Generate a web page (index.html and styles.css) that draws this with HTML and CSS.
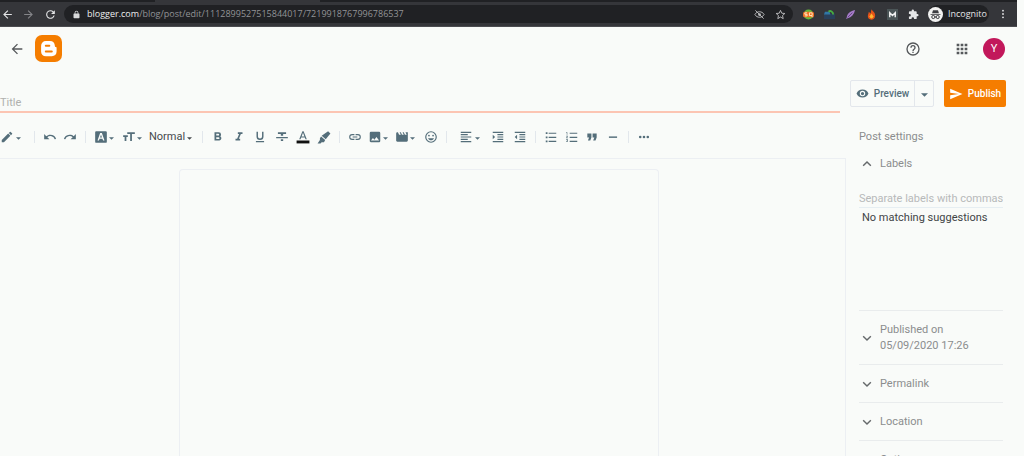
FILE: index.html
```html
<!DOCTYPE html>
<html lang="en">
<head>
<meta charset="utf-8">
<title>Blogger: edit post</title>
<link rel="stylesheet" href="styles.css">
</head>
<body>
<svg class="defs" aria-hidden="true">
  <symbol id="caret" viewBox="0 0 6 3"><path d="M0 0h6L3 3z"/></symbol>
  <symbol id="back" viewBox="0 0 24 24"><path d="M20 11H7.83l5.59-5.59L12 4l-8 8 8 8 1.41-1.41L7.83 13H20z"/></symbol>
  <symbol id="down" viewBox="0 0 24 24"><path d="M17 8.500 12 13.500 7 8.500 5.500 10l6.500 6.500L18.500 10z"/></symbol>
</svg>
<div class="browser">
  <div class="tabs"><span class="tab"></span></div>
  <div class="navbar">
    <button class="nav" aria-label="Back"><svg viewBox="0 0 24 24"><use href="#back"/></svg></button>
    <button class="nav dim" aria-label="Forward"><svg viewBox="0 0 24 24"><path d="m12 4-1.410 1.410L16.170 11H4v2h12.170l-5.580 5.590L12 20l8-8z"/></svg></button>
    <button class="nav" aria-label="Reload"><svg viewBox="0 0 24 24"><path d="M17.650 6.350A8 8 0 1 0 19.730 14h-2.080A6 6 0 1 1 12 6c1.660 0 3.140.690 4.220 1.780L13 11h7V4z"/></svg></button>
    <div class="address">
      <svg class="lock" viewBox="0 0 24 24"><path d="M18 9h-1V7A5 5 0 0 0 7 7v2H6a2 2 0 0 0-2 2v9c0 1.100.9 2 2 2h12a2 2 0 0 0 2-2v-9a2 2 0 0 0-2-2zM9 9V7a3 3 0 0 1 6 0v2z"/></svg>
      <span class="url"><b>blogger.com</b>/blog/post/edit/1112899527515844017/7219918767996786537</span>
      <button aria-label="Cookies blocked"><svg viewBox="0 0 24 24"><path fill="none" stroke="currentColor" stroke-width="2" d="M2 12c4-8 16-8 20 0-4 8-16 8-20 0zM3 3l18 18"/><circle cx="12" cy="12" r="3"/></svg></button>
      <button aria-label="Bookmark"><svg viewBox="0 0 24 24"><path fill="none" stroke="currentColor" stroke-width="2" d="m12 3 2.700 6.200 6.800.6-5.100 4.500 1.500 6.700-5.900-3.500L6.100 21l1.500-6.700-5.100-4.500 6.800-.6z"/></svg></button>
    </div>
    <div class="extensions">
      <button aria-label="SEO extension"><svg viewBox="0 0 12 12"><circle cx="6" cy="6" r="5.500" fill="#64b83c"/><rect x="0" y="3" width="12" height="6" rx="2" fill="#ef6c20"/><path fill="none" stroke="#fff3c8" d="M4.500 4.200H2v1.600h2.500v1.700H2M7 4.200h3v3H7zM9 7l1.500 2"/></svg></button>
      <button aria-label="Rank extension"><svg viewBox="0 0 12 12"><path fill="#29405a" d="M0 5h12v6H0z"/><path fill="#3177a5" d="M1 3h5l1 3H0z"/><path fill="none" stroke="#46ac42" stroke-width="2" d="M5 3c2-2 5 0 5 3"/></svg></button>
      <button aria-label="Feather extension"><svg viewBox="0 0 12 12"><path fill="#a57bc8" d="M11 1C5 2 2 6 2 9l-1 2 2-1c4-1 7-4 8-9z"/><path stroke="#61457f" d="m3 9 5-5"/></svg></button>
      <button aria-label="Flame extension"><svg viewBox="0 0 12 12"><path fill="#e65318" d="M6 0c0 2 4 3 4 7 0 6-8 6-8 1 0-2 1-3 1-5l2 2z"/><path fill="#ffb52e" d="m6 5 2 3c0 3-4 3-4 0z"/></svg></button>
      <button aria-label="M extension"><svg viewBox="0 0 12 12"><path fill="#4b5557" d="M0 0h12v12H0z"/><path fill="none" stroke="#f1f1f1" stroke-width="1.600" d="M3 9V4l3 3 3-3v5"/></svg></button>
      <button aria-label="Extensions"><svg viewBox="0 0 24 24"><path d="M20.500 11H19V7a2 2 0 0 0-2-2h-4V3.500a2.500 2.500 0 0 0-5 0V5H4a2 2 0 0 0-2 2v3.800h1.500a2.700 2.700 0 0 1 0 5.400H2V20c0 1.100.9 2 2 2h3.800v-1.500a2.700 2.700 0 0 1 5.400 0V22H17a2 2 0 0 0 2-2v-4h1.500a2.500 2.500 0 0 0 0-5z"/></svg></button>
    </div>
    <button class="incognito"><svg viewBox="0 0 24 24"><circle cx="12" cy="12" r="12" fill="#f1f1f1"/><path fill="#3c3d42" d="M8 5h8l1.500 5h-11zM4 11h16v1.500H4z"/><path fill="none" stroke="#3c3d42" stroke-width="1.600" d="M11 16h2"/><circle cx="8.500" cy="16" r="2.500" fill="none" stroke="#3c3d42" stroke-width="1.600"/><circle cx="15.500" cy="16" r="2.500" fill="none" stroke="#3c3d42" stroke-width="1.600"/></svg>Incognito</button>
    <button class="nav more" aria-label="Menu"><svg viewBox="0 0 24 24"><circle cx="12" cy="4" r="2.200"/><circle cx="12" cy="12" r="2.200"/><circle cx="12" cy="20" r="2.200"/></svg></button>
  </div>
</div>

<header class="appbar">
  <button class="back" aria-label="Back to posts"><svg viewBox="0 0 24 24"><use href="#back"/></svg></button>
  <a class="logo" href="#" aria-label="Blogger"><svg viewBox="0 0 27 27"><rect width="27" height="27" rx="7" fill="#f57d00"/><path fill="#fff" d="M11 6h4c3 0 4.700 2 4.800 4.500.1 1.200.4 1.500 1.200 1.600.4.100.6.400.6.900v3.500c0 2.800-2 4.700-4.700 4.700H11c-3 0-4.900-2-4.900-4.800V11c0-3 1.900-5 4.900-5z"/><path stroke="#f57d00" stroke-width="2" stroke-linecap="round" d="M10.800 10.700h3.500M10.800 16.500h6"/></svg></a>
  <button class="help" aria-label="Help"><svg viewBox="0 0 24 24"><path d="M11 18h2v-2h-2zm1-16a10 10 0 1 0 0 20 10 10 0 0 0 0-20zm0 18a8 8 0 1 1 0-16 8 8 0 0 1 0 16zm0-14a4 4 0 0 0-4 4h2a2 2 0 1 1 4 0c0 2-3 1.750-3 5h2c0-2.250 3-2.500 3-5a4 4 0 0 0-4-4z"/></svg></button>
  <button class="apps" aria-label="Google apps"><svg viewBox="0 0 24 24"><path d="M4 8h4V4H4zm6 12h4v-4h-4zm-6 0h4v-4H4zm0-6h4v-4H4zm6 0h4v-4h-4zm6-10v4h4V4zm-6 4h4V4h-4zm6 6h4v-4h-4zm0 6h4v-4h-4z"/></svg></button>
  <button class="avatar" aria-label="Account">Y</button>
</header>

<main class="workspace">
  <section class="editor">
    <input class="title" type="text" placeholder="Title" aria-label="Title">
    <div class="toolbar" role="toolbar" aria-label="Formatting">
      <div class="group mode">
        <button class="menu" aria-label="View"><svg viewBox="0 0 24 24"><path d="M3 17.250V21h3.750L17.810 9.940l-3.750-3.750zM20.710 7.040a1 1 0 0 0 0-1.410l-2.340-2.340a1 1 0 0 0-1.410 0l-1.830 1.830 3.750 3.750z"/></svg><svg class="caret"><use href="#caret"/></svg></button>
      </div>
      <div class="group history">
        <button aria-label="Undo"><svg viewBox="0 0 24 24"><path d="M12.500 8c-2.650 0-5.050.990-6.900 2.600L2 7v9h9l-3.620-3.620A8 8 0 0 1 20.100 16l2.370-.780A10.500 10.500 0 0 0 12.500 8z"/></svg></button>
        <button aria-label="Redo"><svg viewBox="0 0 24 24"><path d="M18.400 10.600A10.500 10.500 0 0 0 1.540 15.220L3.900 16a8 8 0 0 1 12.720-3.620L13 16h9V7z"/></svg></button>
      </div>
      <div class="group type">
        <button class="menu" aria-label="Font"><svg viewBox="0 0 24 24"><path fill-rule="evenodd" d="M4 2h16a2 2 0 0 1 2 2v16a2 2 0 0 1-2 2H4a2 2 0 0 1-2-2V4c0-1.100.9-2 2-2zm6.500 3L6 18h2.500l1-3h5l1 3H18L13.500 5zM12 8l1.700 5h-3.400z"/></svg><svg class="caret"><use href="#caret"/></svg></button>
        <button class="menu" aria-label="Font size"><svg viewBox="0 0 24 24"><path d="M9 4v3h5v12h3V7h5V4zm-7 8h2.500v7h3v-7H10V9H2z"/></svg><svg class="caret"><use href="#caret"/></svg></button>
        <button class="menu style">Normal<svg class="caret"><use href="#caret"/></svg></button>
      </div>
      <div class="group text">
        <button aria-label="Bold"><svg viewBox="0 0 24 24"><path d="M15.600 10.790c.970-.670 1.650-1.770 1.650-2.790A4 4 0 0 0 13.250 4H6v14h8.040c2.090 0 3.710-1.700 3.710-3.790 0-1.520-.860-2.820-2.150-3.420zM9 6.500h3.500a1.500 1.500 0 0 1 0 3H9zm4 9H9v-3h4a1.500 1.500 0 0 1 0 3z"/></svg></button>
        <button aria-label="Italic"><svg viewBox="0 0 24 24"><path d="M10 4v3h2.210l-3.420 8H6v3h8v-3h-2.210l3.420-8H18V4z"/></svg></button>
        <button aria-label="Underline"><svg viewBox="0 0 24 24"><path d="M12 17a6 6 0 0 0 6-6V3h-2.500v8a3.500 3.500 0 0 1-7 0V3H6v8a6 6 0 0 0 6 6zm-7 2v2h14v-2z"/></svg></button>
        <button aria-label="Strikethrough"><svg viewBox="0 0 24 24"><path d="M10 19h4v-3h-4zM5 4v3h5v3h4V7h5V4zM2 14h20v-2H2z"/></svg></button>
        <button aria-label="Text colour"><svg viewBox="0 0 24 24"><path d="M11 2 5.500 16h2.250l1.120-3h6.250l1.120 3h2.250L13 2zm-1.380 9L12 4.670 14.380 11z"/><path fill="#111" d="M1 18h22v5H1z"/></svg></button>
        <button aria-label="Highlight"><svg viewBox="0 0 24 24"><path d="m19 2 4 4-8 10-7-6zM7 11l7 6-2 4H8l-2 2H1l4-6v-3z"/></svg></button>
      </div>
      <div class="group insert">
        <button aria-label="Link"><svg viewBox="0 0 24 24"><path d="M3.900 12A3.100 3.100 0 0 1 7 8.900h4V7H7a5 5 0 0 0 0 10h4v-1.900H7A3.100 3.100 0 0 1 3.900 12zM8 13h8v-2H8zm9-6h-4v1.900h4a3.100 3.100 0 0 1 0 6.200h-4V17h4a5 5 0 0 0 0-10z"/></svg></button>
        <button class="menu" aria-label="Image"><svg viewBox="0 0 24 24"><path d="M21 19V5a2 2 0 0 0-2-2H5a2 2 0 0 0-2 2v14c0 1.100.9 2 2 2h14a2 2 0 0 0 2-2zM8.500 13.500l2.500 3 3.500-4.500 4.500 6H5z"/></svg><svg class="caret"><use href="#caret"/></svg></button>
        <button class="menu" aria-label="Video"><svg viewBox="0 0 24 24"><path d="m18 4 2 4h-3l-2-4h-2l2 4h-3l-2-4H8l2 4H7L5 4H4a2 2 0 0 0-2 2v12c0 1.100.9 2 2 2h16a2 2 0 0 0 2-2V4z"/></svg><svg class="caret"><use href="#caret"/></svg></button>
        <button aria-label="Emoji"><svg viewBox="0 0 24 24"><circle cx="12" cy="12" r="9" fill="none" stroke="currentColor" stroke-width="2"/><circle cx="8.500" cy="9.500" r="1.500"/><circle cx="15.500" cy="9.500" r="1.500"/><path d="M12 17.500c2.330 0 4.310-1.460 5.110-3.500H6.890c.8 2.040 2.780 3.500 5.110 3.500z"/></svg></button>
      </div>
      <div class="group align">
        <button class="menu" aria-label="Align"><svg viewBox="0 0 24 24"><path d="M15 15H3v2h12zm0-8H3v2h12zM3 13h18v-2H3zm0 8h18v-2H3zM3 3v2h18V3z"/></svg><svg class="caret"><use href="#caret"/></svg></button>
        <button aria-label="Increase indent"><svg viewBox="0 0 24 24"><path d="M3 21h18v-2H3zM3 8v8l4-4zm8 9h10v-2H11zM3 3v2h18V3zm8 6h10V7H11zm0 4h10v-2H11z"/></svg></button>
        <button aria-label="Decrease indent"><svg viewBox="0 0 24 24"><path d="M11 17h10v-2H11zm-8-5 4 4V8zm0 9h18v-2H3zM3 3v2h18V3zm8 6h10V7H11zm0 4h10v-2H11z"/></svg></button>
      </div>
      <div class="group lists">
        <button aria-label="Bulleted list"><svg viewBox="0 0 24 24"><path d="M3 4h3v3H3zm0 7h3v3H3zm0 7h3v3H3zM8 4.500h13v2H8zm0 7h13v2H8zm0 7h13v2H8z"/></svg></button>
        <button aria-label="Numbered list"><svg viewBox="0 0 24 24"><path d="M2 17h2v.5H3v1h1v.5H2v1h3v-4H2zm1-9h1V4H2v1h1zm-1 3h1.800L2 13.100v.9h3v-1H3.200L5 10.900V10H2zM8 4.500h13v2H8zm0 7h13v2H8zm0 7h13v2H8z"/></svg></button>
        <button aria-label="Quote"><svg viewBox="0 0 24 24"><path d="M5 18h4l2-5V6H4v7h3zm9 0h4l2-5V6h-7v7h3z"/></svg></button>
        <button aria-label="Horizontal line"><svg viewBox="0 0 24 24"><path d="M5 11h14v2.500H5z"/></svg></button>
      </div>
      <div class="group last">
        <button aria-label="More"><svg viewBox="0 0 24 24"><circle cx="5.500" cy="12" r="2.200"/><circle cx="12" cy="12" r="2.200"/><circle cx="18.500" cy="12" r="2.200"/></svg></button>
      </div>
    </div>
    <div class="canvas"><div class="page" contenteditable="true" role="textbox" aria-label="Post body"></div></div>
  </section>

  <aside class="side">
    <div class="actions">
      <div class="split">
        <button class="preview"><svg viewBox="0 0 24 24"><path d="M12 4.500A11.800 11.800 0 0 0 1 12a11.800 11.800 0 0 0 22 0 11.800 11.800 0 0 0-11-7.500zM12 17a5 5 0 1 1 0-10 5 5 0 0 1 0 10zm0-8a3 3 0 1 0 0 6 3 3 0 0 0 0-6z"/></svg>Preview</button>
        <button class="drop" aria-label="Preview options"><svg class="caret"><use href="#caret"/></svg></button>
      </div>
      <button class="publish"><svg viewBox="0 0 24 24"><path d="M2 21 23 12 2 3v7l15 2-15 2z"/></svg>Publish</button>
    </div>
    <div class="settings">
      <h2>Post settings</h2>
      <div class="labels">
        <button class="row open"><svg viewBox="0 0 24 24"><use href="#down"/></svg><span>Labels</span></button>
        <input type="text" placeholder="Separate labels with commas" aria-label="Labels">
        <p>No matching suggestions</p>
      </div>
      <button class="row"><svg viewBox="0 0 24 24"><use href="#down"/></svg><span>Published on<br>05/09/2020 17:26</span></button>
      <button class="row"><svg viewBox="0 0 24 24"><use href="#down"/></svg><span>Permalink</span></button>
      <button class="row"><svg viewBox="0 0 24 24"><use href="#down"/></svg><span>Location</span></button>
      <button class="row"><svg viewBox="0 0 24 24"><use href="#down"/></svg><span>Options</span></button>
    </div>
  </aside>
</main>
</body>
</html>
```
FILE: styles.css
```css
* { box-sizing: border-box; }
body {
  margin: 0;
  height: 100vh;
  overflow: hidden;
  display: flex;
  flex-direction: column;
  background: #f9fbf9;
  color: #8b8d8e;
  font: 11px/16px Roboto, sans-serif;
}
button, input {
  margin: 0;
  padding: 0;
  border: 0;
  background: none;
  color: inherit;
  font: inherit;
}
input { outline: 0; }
button {
  display: flex;
  align-items: center;
  justify-content: center;
  flex-shrink: 0;
}
svg { display: block; flex-shrink: 0; fill: currentColor; }
.defs { position: absolute; width: 0; height: 0; }
.caret { width: 5px; height: 3px; }

/* Browser frame */
.browser {
  flex-shrink: 0;
  margin-right: 7px;
  background: #35363a;
  border-bottom: 1px solid #4b4c50;
  color: #e4e5e7;
  font: 9px/16px "Open Sans", sans-serif;
}
.tabs { height: 2px; background: #202124; padding-left: 155px; }
.tab { display: block; width: 165px; height: 2px; background: #35363a; }
.navbar { display: flex; align-items: center; height: 24px; }
.nav { width: 21px; height: 20px; }
.nav:first-child { width: 18px; padding-right: 3px; }
.nav svg { width: 13px; height: 13px; }
.dim { color: #85868a; }
.nav + .nav + .nav { width: 22px; }
.address {
  flex: 1;
  display: flex;
  align-items: center;
  height: 18px;
  margin-left: 3px;
  padding: 0 2px 0 8px;
  border-radius: 9px;
  background: #202124;
  color: #929396;
}
.lock { width: 9px; height: 9px; margin-right: 6px; color: #d8d9da; }
.url { flex: 1; white-space: nowrap; }
.url b { color: #eceded; font-weight: 400; }
.address button { width: 21px; color: #bfc0c2; }
.address button svg { width: 11px; height: 11px; }
.extensions { display: flex; padding-left: 5px; }
.extensions button { width: 21px; height: 18px; }
.extensions svg { width: 11px; height: 11px; }
.incognito {
  gap: 5px;
  height: 18px;
  margin-left: 4px;
  padding: 0 2px 0 0;
  border-radius: 9px;
  background: #202124;
}
.incognito svg { width: 15px; height: 15px; }
.navbar .more { width: 28px; }
.more svg { width: 10px; height: 10px; }

/* Application header */
.appbar {
  flex-shrink: 0;
  display: flex;
  align-items: center;
  height: 43px;
  padding: 0 19px 0 9px;
  color: #55585b;
}
.back svg, .help svg, .apps svg { width: 16px; height: 16px; }
.logo { width: 27px; margin-left: 10px; }
.help { margin-left: auto; }
.apps { margin: 0 13px 0 33px; }
.avatar {
  width: 22px;
  height: 22px;
  border-radius: 50%;
  background: #c2185b;
  color: #fff;
}

/* Workspace */
.workspace {
  flex: 1;
  min-height: 0;
  display: grid;
  grid-template-columns: minmax(0, 1fr) 178px;
}
.editor { display: flex; flex-direction: column; min-width: 0; }
.title {
  height: 43px;
  margin-right: 6px;
  padding-top: 24px;
  border-bottom: 2px solid #fcc5b3;
}
.title::placeholder { color: #b0b1ae; opacity: 1; }
.toolbar {
  display: flex;
  align-items: center;
  height: 45px;
  padding-top: 2px;
  color: #546e7a;
}
.group {
  display: flex;
  align-items: center;
  justify-content: space-between;
  height: 12px;
  padding: 0 5px;
  border-right: 1px solid #e2e7ec;
}
.group svg:not(.caret) { width: 14px; height: 14px; }
.group button { width: 20px; height: 20px; }
.group .menu { width: 27px; gap: 1px; padding-left: 2px; justify-content: flex-start; }
.group .caret { margin-top: 3px; }
.mode { width: 35px; padding: 0; }
.mode .menu, .align .menu { gap: 2px; padding-left: 0; }
.history { width: 51px; }
.type { width: 117px; padding-right: 8px; }
.type .menu { padding-left: 3px; }
.type .style { width: 48px; gap: 2px; color: #45494c; }
.text { width: 137px; }
.insert { width: 107px; }
.align { width: 89px; padding-left: 12px; }
.lists { width: 93px; }
.last { border: 0; }
.canvas {
  flex: 1;
  display: flex;
  justify-content: center;
  padding: 10px 7px 0 0;
  border: solid #eceff3;
  border-width: 1px 1px 0 0;
}
.page {
  width: 480px;
  border: 1px solid #eceff3;
  border-bottom: 0;
  border-radius: 4px 4px 0 0;
}

/* Sidebar */
.side { padding: 10px 18px 0 4px; }
.actions { display: flex; justify-content: space-between; font-size: 10px; font-weight: 500; }
.split {
  display: flex;
  height: 27px;
  border: 1px solid #e3e7ec;
  border-radius: 2px;
  color: #546e7a;
}
.preview { width: 63px; gap: 5px; }
.preview svg { width: 13px; height: 13px; }
.drop { width: 19px; border-left: 1px solid #e3e7ec; }
.drop .caret { width: 7px; height: 4px; margin-top: 2px; }
.publish {
  width: 62px;
  height: 27px;
  gap: 5px;
  border-radius: 2px;
  background: #f57d00;
  color: #fff;
}
.publish svg { width: 14px; height: 14px; }
.settings { margin: 22px 3px 0 9px; }
h2 { margin: 0; font-size: 11px; line-height: 16px; font-weight: 400; }
.labels { height: 166px; border-bottom: 1px solid #e9eced; }
.labels input {
  width: 100%;
  height: 18px;
  margin-top: 8px;
  border-bottom: 1px solid #e6eef2;
}
.labels input::placeholder { color: #b7b9ba; opacity: 1; }
.labels p { margin: 2px 3px; color: #414446; white-space: nowrap; }
.row {
  width: 100%;
  justify-content: flex-start;
  gap: 5px;
  padding: 11px 0 10px;
  border-bottom: 1px solid #e9eced;
  text-align: left;
}
.row svg { width: 16px; height: 16px; color: #65696b; }
.row.open { border: 0; }
.row.open svg { transform: rotate(180deg); }
```
